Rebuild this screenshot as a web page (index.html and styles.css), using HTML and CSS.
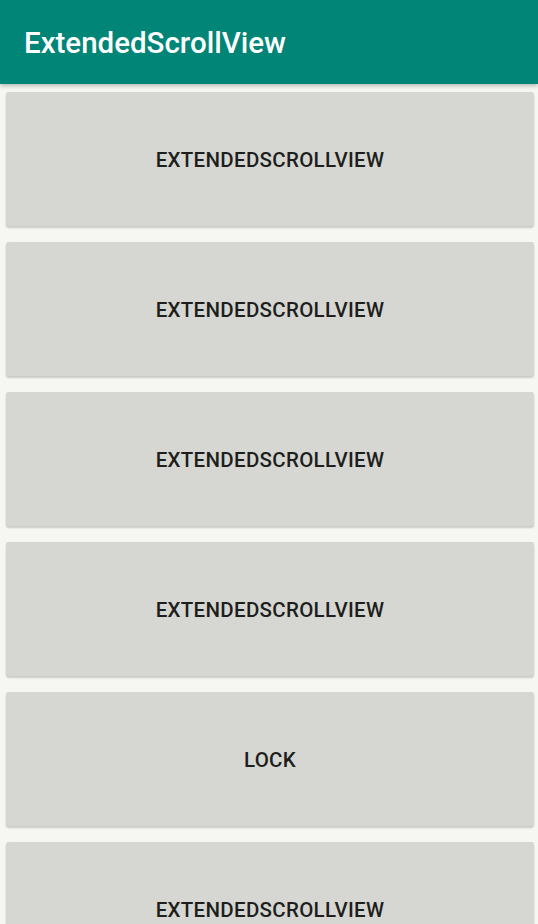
FILE: index.html
```html
<!DOCTYPE html>
<html>
<head>
<meta charset="utf-8">
<link rel="stylesheet" href="styles.css">
</head>
<body>
<header class="appbar"><h1 class="title">ExtendedScrollView</h1></header>
<main class="list">
  <button class="btn">EXTENDEDSCROLLVIEW</button>
  <button class="btn">EXTENDEDSCROLLVIEW</button>
  <button class="btn">EXTENDEDSCROLLVIEW</button>
  <button class="btn">EXTENDEDSCROLLVIEW</button>
  <button class="btn">LOCK</button>
  <button class="btn">EXTENDEDSCROLLVIEW</button>
</main>
</body>
</html>
```
FILE: styles.css
```css
html, body { margin: 0; padding: 0; }
body {
  background: #f6f7f3;
  font-family: Roboto, "Noto Sans", sans-serif;
  width: 538px;
  height: 924px;
  overflow: hidden;
}
.appbar {
  height: 84px;
  background: #008577;
  display: flex;
  align-items: center;
  padding-left: 24px;
  box-shadow: 0 2px 4px rgba(0,0,0,0.25);
  position: relative;
  z-index: 1;
}
.title {
  margin: 0;
  color: #ffffff;
  font-weight: 500;
  font-size: 29.5px;
  letter-spacing: 0;
  padding-top: 2px;
}
.list {
  display: flex;
  flex-direction: column;
  gap: 16px;
  padding: 8px 4px 0 6px;
}
.btn {
  flex: none;
  height: 134px;
  width: 528px;
  border: none;
  border-radius: 3px;
  background: #d6d7d2;
  box-shadow: 0 2px 2px rgba(0,0,0,0.18), 0 0 1px rgba(0,0,0,0.1);
  color: #1e1f1d;
  font-family: Roboto, sans-serif;
  font-weight: 500;
  font-size: 20.5px;
  letter-spacing: 0.3px;
  padding: 2px 0 0;
}
```
